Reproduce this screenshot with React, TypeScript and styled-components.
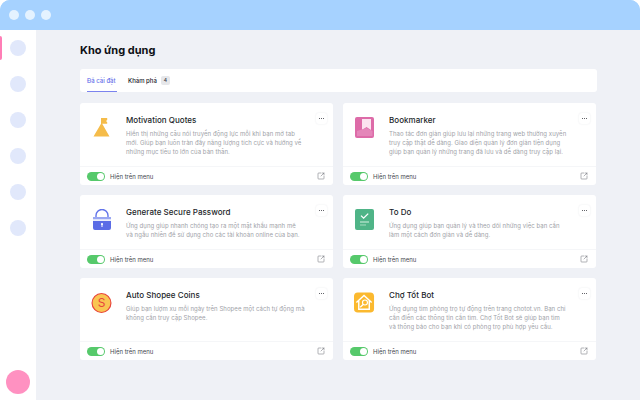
import React from 'react';
import styled, { createGlobalStyle } from 'styled-components';
import { SquareArrowOutUpRight } from 'lucide-react';

const GlobalStyle = createGlobalStyle`
  html, body { margin: 0; padding: 0; background: #fff; }
  body { font-family: Inter, "Liberation Sans", sans-serif; }
`;

const Page = styled.div`
  width: 640px; height: 400px; overflow: hidden; display: flex; flex-direction: column;
  border-radius: 10px 10px 0 0; background: #a6d2ff;
`;
const TitleBar = styled.div`
  height: 30px; flex: none; display: flex; align-items: center; gap: 6px; padding-left: 9px;
  background: #a6d2ff;
`;
const WindowDot = styled.span`
  width: 10px; height: 10px; border-radius: 50%; background: #e4f2ff;
`;
const Body = styled.div`
  flex: 1; display: flex; min-height: 0;
`;
const Sidebar = styled.div`
  width: 36px; flex: none; background: #fff; position: relative;
  display: flex; flex-direction: column; align-items: center; padding-top: 10px; box-sizing: border-box;
`;
const ActiveMark = styled.span`
  position: absolute; left: 0; top: 6px; width: 2px; height: 24px; background: #ff7eb6; border-radius: 0 2px 2px 0;
`;
const NavDot = styled.span`
  width: 16px; height: 16px; border-radius: 50%; background: #e1e8fb; margin-bottom: 20px;
`;
const Avatar = styled.span`
  width: 24px; height: 24px; border-radius: 50%; background: #ff91c1; margin-top: auto; margin-bottom: 6px;
`;
const Main = styled.div`
  flex: 1; background: #eff1f6; padding: 14px 43px 0 44px; min-width: 0;
`;
const Heading = styled.h1`
  margin: 0; font-size: 11px; line-height: 13px; font-weight: 700; color: #0d0f14; height: 25px;
`;
const TabBar = styled.div`
  height: 23px; background: #fff; border-radius: 3px; display: flex; align-items: stretch; padding-left: 7px; gap: 11px;
`;
const Tab = styled.div<{ $active?: boolean }>`
  display: flex; align-items: center; gap: 4px; font-size: 6px; font-weight: 500;
  width: ${p => (p.$active ? '30px' : 'auto')};
  color: ${p => (p.$active ? '#6670ea' : '#23252c')};
  border-bottom: ${p => (p.$active ? '1px solid #7b83ee' : '1px solid transparent')};
`;
const Count = styled.span`
  width: 9px; height: 9px; border-radius: 2px; background: #e6e7ea; color: #3f4148;
  display: flex; align-items: center; justify-content: center; font-size: 5px;
`;
const Grid = styled.div`
  display: grid; grid-template-columns: 253px 253px; column-gap: 10px; margin-top: 11px;
  grid-template-rows: 82px 73px 82px; row-gap: 10px;
`;
const Card = styled.div`
  background: #fff; border-radius: 3px; display: flex; flex-direction: column;
`;
const CardTop = styled.div`
  flex: 1; display: flex; position: relative; padding: 11.5px 0 0 11px; min-height: 0;
`;
const IconSlot = styled.div`
  width: 21px; height: 24px; flex: none; margin: 2.5px 14px 0 0; display: flex; align-items: flex-start; justify-content: center;
`;
const CardText = styled.div`
  width: 182px;
`;
const CardTitle = styled.div`
  font-size: 8px; line-height: 10px; font-weight: 500; color: #1c1f2a; letter-spacing: 0.03px;
`;
// line breaks are kept as they are in the data
const CardDesc = styled.p`
  margin: 4px 0 0; font-size: 6px; line-height: 9.2px; color: #a0a2a8; letter-spacing: 0.06px; white-space: pre;
`;
const MenuButton = styled.div`
  position: absolute; right: 6px; top: 10px; width: 11px; height: 11px; border-radius: 3px;
  display: flex; align-items: center; justify-content: center; gap: 1px;
  box-shadow: 0 0 2px rgba(30, 40, 70, 0.1);
  span { width: 1.2px; height: 1.2px; border-radius: 50%; background: #30323a; }
`;
const CardFooter = styled.div`
  height: 18px; flex: none; border-top: 1px solid #f5f6f8; display: flex; align-items: center;
  padding: 0 8px 0 7px; color: #45474f; font-size: 6px; font-weight: 400;
`;
const Toggle = styled.span`
  width: 18px; height: 9px; border-radius: 5px; background: #56c96b; position: relative; margin-right: 5px;
  &::after { content: ''; position: absolute; right: 1px; top: 1px; width: 7px; height: 7px; border-radius: 50%; background: #fff; }
`;
const ExternalLink = styled(SquareArrowOutUpRight)`
  margin-left: auto; color: #63656c;
`;

const FlagIcon = () => (
  <svg width="17" height="20" viewBox="0 0 17 20">
    <path d="M8 1h6.2v2l-1.2 1 1.2 1.2v1.6H9.2L16.5 19.4H.5L8 6.8z" fill="#f5bc4a" />
  </svg>
);
const BookmarkIcon = () => (
  <svg width="20" height="22" viewBox="0 0 20 22">
    <rect width="19" height="21" rx="2" fill="#dd6ba8" />
    <path d="M7 2h9v11l-4.5-3L7 13z" fill="#fbe3ef" />
    <path d="M2 14l9.5-3 6 3v5H2z" fill="#e486b9" />
  </svg>
);
const LockIcon = () => (
  <svg width="20" height="22" viewBox="0 0 20 22">
    <path d="M4 9V6.5a6 6 0 0 1 12 0V9" fill="none" stroke="#6274ea" strokeWidth="1.4" />
    <rect x="1" y="8" width="18" height="2.4" fill="#9aa7f2" />
    <rect x="1" y="10.4" width="18" height="1.2" fill="#dfe4fb" />
    <path d="M1 12h18v7a2 2 0 0 1-2 2H3a2 2 0 0 1-2-2z" fill="#5b6ce6" />
    <circle cx="10" cy="15" r="1.1" fill="#fff" />
    <rect x="9.5" y="15" width="1" height="3" fill="#fff" />
  </svg>
);
const TodoIcon = () => (
  <svg width="20" height="22" viewBox="0 0 20 22">
    <rect width="19" height="21" rx="2" fill="#4fb487" />
    <path d="M6 6.6l2.6 2.6 4.6-4.6" fill="none" stroke="#fff" strokeWidth="1.3" />
    <rect x="5" y="12.5" width="9" height="1" fill="#d5efe2" />
    <rect x="5" y="15.5" width="6" height="1" fill="#a5dcc0" />
  </svg>
);
const CoinIcon = () => (
  <svg width="22" height="22" viewBox="0 0 22 22">
    <circle cx="11" cy="11" r="9.9" fill="#f9c552" stroke="#e8453c" strokeWidth="1.2" />
    <text x="11" y="15.4" textAnchor="middle" fontSize="12.5" fontFamily="Inter, sans-serif" fill="#e8453c">S</text>
  </svg>
);
const HouseIcon = () => (
  <svg width="22" height="22" viewBox="0 0 22 22">
    <rect width="21" height="21" rx="4" fill="#fbb92f" />
    <path d="M2.5 10.5L10.5 3l8 7.5M5 9v8.5h11V9" fill="none" stroke="#fff" strokeWidth="1.5" />
    <circle cx="11.5" cy="10.5" r="2.6" fill="none" stroke="#fff" strokeWidth="1.2" />
    <path d="M9.6 12.5L6.5 15.5" stroke="#fff" strokeWidth="1.4" />
  </svg>
);

const apps = [
  { title: 'Motivation Quotes', icon: <FlagIcon />, desc: 'Hiển thị những câu nói truyền động lực mỗi khi bạn mở tab\nmới. Giúp bạn luôn tràn đầy năng lượng tích cực và hướng về\nnhững mục tiêu to lớn của bản thân.' },
  { title: 'Bookmarker', icon: <BookmarkIcon />, desc: 'Thao tác đơn giản giúp lưu lại những trang web thường xuyên\ntruy cập thật dễ dàng. Giao diện quản lý đơn giản tiện dụng\ngiúp bạn quản lý những trang đã lưu và dễ dàng truy cập lại.' },
  { title: 'Generate Secure Password', icon: <LockIcon />, desc: 'Ứng dụng giúp nhanh chóng tạo ra một mật khẩu mạnh mẽ\nvà ngẫu nhiên để sử dụng cho các tài khoản online của bạn.' },
  { title: 'To Do', icon: <TodoIcon />, desc: 'Ứng dụng giúp bạn quản lý và theo dõi những việc bạn cần\nlàm một cách đơn giản và dễ dàng.' },
  { title: 'Auto Shopee Coins', icon: <CoinIcon />, desc: 'Giúp bạn lượm xu mỗi ngày trên Shopee một cách tự động mà\nkhông cần truy cập Shopee.' },
  { title: 'Chợ Tốt Bot', icon: <HouseIcon />, desc: 'Ứng dụng tìm phòng trọ tự động trên trang chotot.vn. Bạn chỉ\ncần điền các thông tin cần tìm. Chợ Tốt Bot sẽ giúp bạn tìm\nvà thông báo cho bạn khi có phòng trọ phù hợp yêu cầu.' },
];

const App = () => (
  <>
    <GlobalStyle />
    <Page>
      <TitleBar>
        <WindowDot />
        <WindowDot />
        <WindowDot />
      </TitleBar>
      <Body>
        <Sidebar>
          <ActiveMark />
          {[0, 1, 2, 3, 4, 5].map(i => <NavDot key={i} />)}
          <Avatar />
        </Sidebar>
        <Main>
          <Heading>Kho ứng dụng</Heading>
          <TabBar>
            <Tab $active>Đã cài đặt</Tab>
            <Tab>Khám phá <Count>4</Count></Tab>
          </TabBar>
          <Grid>
            {apps.map(app => (
              <Card key={app.title}>
                <CardTop>
                  <IconSlot>{app.icon}</IconSlot>
                  <CardText>
                    <CardTitle>{app.title}</CardTitle>
                    <CardDesc>{app.desc}</CardDesc>
                  </CardText>
                  <MenuButton><span /><span /><span /></MenuButton>
                </CardTop>
                <CardFooter>
                  <Toggle />
                  Hiện trên menu
                  <ExternalLink size={8} strokeWidth={1.5} />
                </CardFooter>
              </Card>
            ))}
          </Grid>
        </Main>
      </Body>
    </Page>
  </>
);

export default App;
